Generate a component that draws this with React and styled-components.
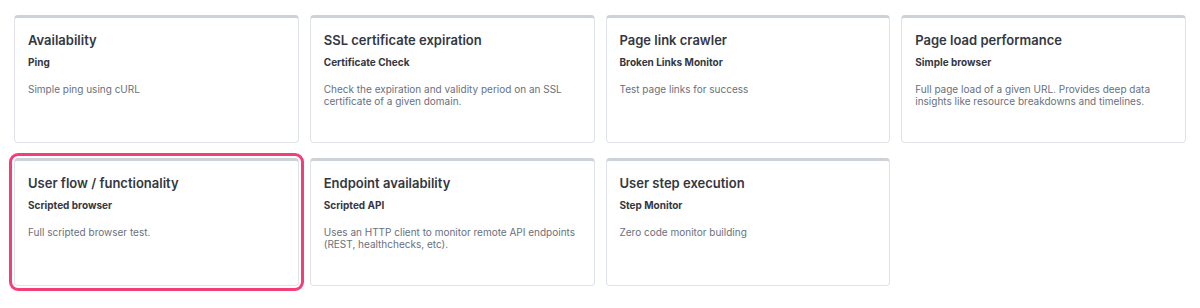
import React from 'react';
import styled, { createGlobalStyle } from 'styled-components';

const GlobalStyle = createGlobalStyle`
    html, body {
        margin: 0;
        padding: 0;
        background: #ffffff;
    }
    body {
        font-family: Inter, 'Noto Sans', sans-serif;
        -webkit-font-smoothing: antialiased;
    }
`;

const Grid = styled.div`
    display: grid;
    grid-template-columns: repeat(4, 1fr);
    column-gap: 11px;
    row-gap: 15px;
    padding: 15px 14px;
`;

const Card = styled.div`
    box-sizing: border-box;
    height: 128px;
    background: #ffffff;
    border: 1px solid #dfe3e8;
    border-top: 3px solid #ccd2d8;
    border-radius: 4px;
    padding: 12px 14px 12px 13px;
    outline: ${props => (props.selected ? '3px solid #f23f78' : 'none')};
    outline-offset: 2px;
    cursor: pointer;
`;

const Title = styled.div`
    font-size: 13px;
    line-height: 20px;
    font-weight: 600;
    color: #343741;
`;

const Subtitle = styled.div`
    margin-top: 4px;
    font-size: 10px;
    line-height: 16px;
    font-weight: 700;
    color: #343741;
`;

const Description = styled.div`
    margin-top: 11px;
    font-size: 10px;
    line-height: 12px;
    color: #69707d;
    padding-top: 2px;
`;

const monitors = [
    { title: 'Availability', type: 'Ping', text: 'Simple ping using cURL' },
    { title: 'SSL certificate expiration', type: 'Certificate Check', text: 'Check the expiration and validity period on an SSL certificate of a given domain.' },
    { title: 'Page link crawler', type: 'Broken Links Monitor', text: 'Test page links for success' },
    { title: 'Page load performance', type: 'Simple browser', text: 'Full page load of a given URL. Provides deep data insights like resource breakdowns and timelines.' },
    { title: 'User flow / functionality', type: 'Scripted browser', text: 'Full scripted browser test.', selected: true },
    { title: 'Endpoint availability', type: 'Scripted API', text: 'Uses an HTTP client to monitor remote API endpoints (REST, healthchecks, etc).' },
    { title: 'User step execution', type: 'Step Monitor', text: 'Zero code monitor building' },
];

export default function App() {
    return (
        <>
            <GlobalStyle />
            <Grid>
                {monitors.map(m => (
                    <Card key={m.title} selected={m.selected}>
                        <Title>{m.title}</Title>
                        <Subtitle>{m.type}</Subtitle>
                        <Description>{m.text}</Description>
                    </Card>
                ))}
            </Grid>
        </>
    );
}
